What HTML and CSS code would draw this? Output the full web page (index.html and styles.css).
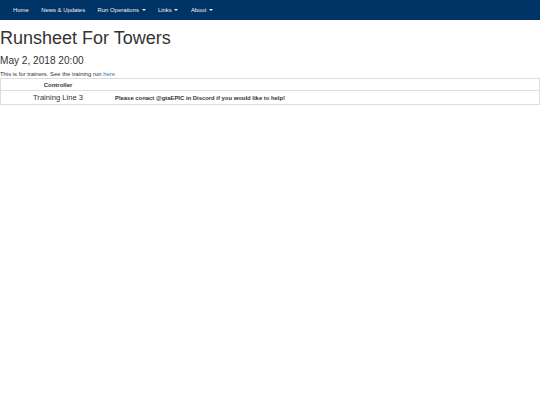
FILE: index.html
```
<!DOCTYPE html>
<html>
<head>
<meta charset="utf-8">
<link rel="stylesheet" href="styles.css">
</head>
<body>
<nav class="navbar">
  <ul class="nav">
    <li>Home</li>
    <li>News &amp; Updates</li>
    <li>Run Operations <span class="caret"></span></li>
    <li>Links <span class="caret"></span></li>
    <li>About <span class="caret"></span></li>
  </ul>
</nav>
<h1 class="title">Runsheet For Towers</h1>
<h3 class="date">May 2, 2018 20:00</h3>
<p class="note">This is for trainers. See the training run <a class="link">here</a></p>
<table class="sheet">
  <thead>
    <tr><th class="col1">Controller</th><th class="col2"></th></tr>
  </thead>
  <tbody>
    <tr><td class="line">Training Line 3</td><td class="msg">Please conact @gtaEPIC in Discord if you would like to help!</td></tr>
  </tbody>
</table>
</body>
</html>
```
FILE: styles.css
```
html, body {
  margin: 0;
  padding: 0;
  background: #fff;
  font-family: "Liberation Sans", Arial, sans-serif;
  color: #333;
}
.navbar {
  background: #003366;
  height: 20px;
  display: flex;
  align-items: center;
}
.nav {
  list-style: none;
  margin: 0;
  padding: 0 0 0 7px;
  display: flex;
  font-size: 5.9px;
  color: #f2f2f2;
}
.nav li {
  padding: 0 6.5px 0 6px;
}
.caret {
  display: inline-block;
  width: 0;
  height: 0;
  border-left: 2px solid transparent;
  border-right: 2px solid transparent;
  border-top: 2px solid #f2f2f2;
  vertical-align: middle;
  margin-left: 1px;
}
.title {
  font-size: 18px;
  font-weight: normal;
  margin: 8px 0 0 0;
  line-height: 20px;
}
.date {
  font-size: 10.1px;
  font-weight: normal;
  margin: 6px 0 0 0;
  line-height: 14px;
}
.note {
  font-size: 5.9px;
  margin: 2px 0 0 0;
  line-height: 8px;
}
.link {
  color: #337ab7;
}
.sheet {
  width: 100%;
  border-collapse: collapse;
  border: 1px solid #ddd;
}
.sheet th, .sheet td {
  border-top: 1px solid #ddd;
  padding: 0;
}
.sheet th {
  font-size: 6px;
  height: 11px;
  text-align: center;
}
.col1 {
  width: 114px;
}
.line {
  text-align: center;
  font-size: 7.6px;
  height: 13px;
}
.msg {
  font-size: 5.9px;
  font-weight: bold;
}
```
